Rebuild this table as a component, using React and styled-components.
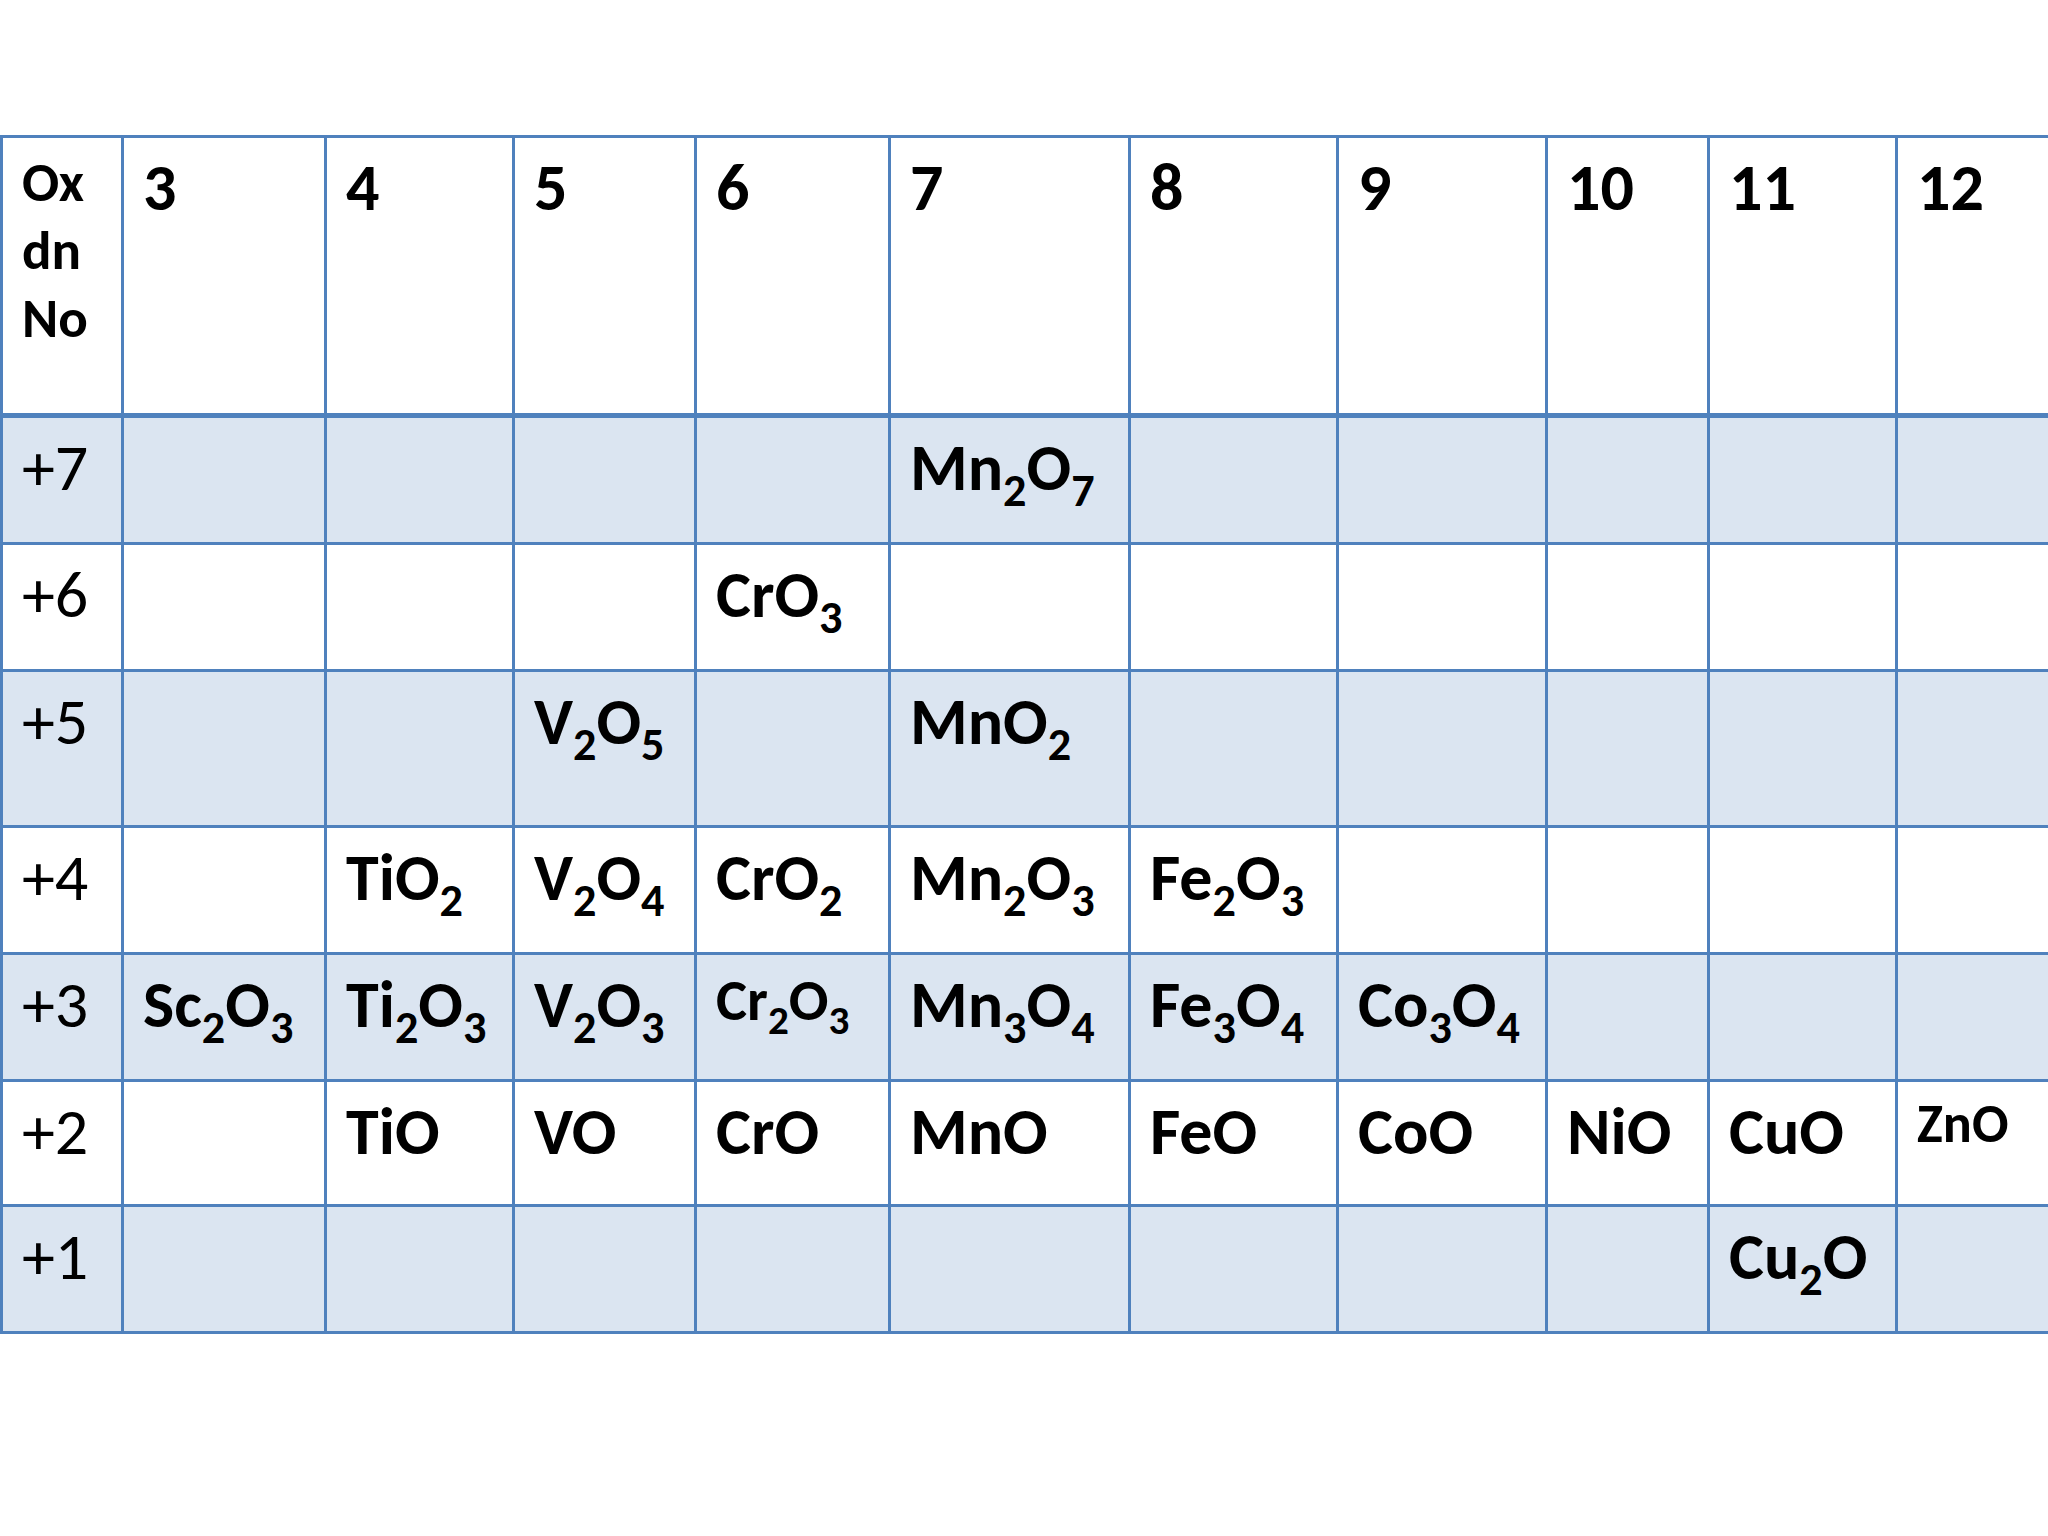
import styled, { createGlobalStyle } from "styled-components";

const GlobalStyle = createGlobalStyle`
    html, body {
        margin: 0;
        padding: 0;
        background: #ffffff;
        overflow: hidden;
    }
`

const Page = styled.div`
    width: 2048px;
    height: 1536px;
    padding-top: 135px;
    box-sizing: border-box;
    font-family: Carlito, Lato, "Liberation Sans", sans-serif;
    color: #000000;
`

const Table = styled.table`
    width: 2049px;
    table-layout: fixed;
    border-collapse: collapse;
`

const HeadCell = styled.th`
    height: 265px;
    padding: 10px 0 0 19px;
    border: 3px solid #4f81bd;
    border-bottom-width: 5px;
    background: #ffffff;
    vertical-align: top;
    text-align: left;
    font-size: 66px;
    font-weight: 700;
    line-height: 1.2;
`

const OxLabel = styled.div`
    font-size: 55px;
    font-weight: 700;
    line-height: 68px;
    &:first-child {
        margin-top: 1px;
    }
`

const Row = styled.tr`
    background: ${props => props.shaded ? "#dbe5f1" : "#ffffff"};
`

const Cell = styled.td`
    height: ${props => props.h}px;
    padding: 10px 0 0 19px;
    border: 3px solid #4f81bd;
    vertical-align: top;
    text-align: left;
    font-size: 66px;
    font-weight: ${props => props.label ? 400 : 700};
    line-height: 1.2;
    white-space: nowrap;
`

const Formula = styled.div`
    font-size: ${props => props.scale}em;
    line-height: 1.2;
`

const Sub = styled.span`
    font-size: 0.7em;
    vertical-align: -0.35em;
    line-height: 0;
`

const cols = [121, 203, 188, 182, 194, 240, 208, 209, 162, 188, 153]
const groups = ["3", "4", "5", "6", "7", "8", "9", "10", "11", "12"]

const rows = [
    { ox: "+7", h: 114, shaded: true, cells: { 4: "Mn2O7" } },
    { ox: "+6", h: 114, shaded: false, cells: { 3: "CrO3" } },
    { ox: "+5", h: 143, shaded: true, cells: { 2: "V2O5", 4: "MnO2" } },
    { ox: "+4", h: 114, shaded: false, cells: { 1: "TiO2", 2: "V2O4", 3: "CrO2", 4: "Mn2O3", 5: "Fe2O3" } },
    { ox: "+3", h: 114, shaded: true, cells: { 0: "Sc2O3", 1: "Ti2O3", 2: "V2O3", 3: "Cr2O3", 4: "Mn3O4", 5: "Fe3O4", 6: "Co3O4" } },
    { ox: "+2", h: 112, shaded: false, cells: { 1: "TiO", 2: "VO", 3: "CrO", 4: "MnO", 5: "FeO", 6: "CoO", 7: "NiO", 8: "CuO", 9: "ZnO" } },
    { ox: "+1", h: 114, shaded: true, cells: { 8: "Cu2O" } },
]

// a few formulas were typed smaller on the slide
const smaller = {
    Cr2O3: 0.89,
    ZnO: 0.82,
}

function Chem({ text }) {
    const parts = text.split(/(\d+)/).filter(p => p !== "")
    return (
        <Formula scale={smaller[text] || 1}>
            {parts.map((p, i) => /\d/.test(p) ? <Sub key={i}>{p}</Sub> : <span key={i}>{p}</span>)}
        </Formula>
    )
}

function App() {
    return (
        <Page>
            <GlobalStyle />
            <Table>
                <colgroup>
                    {cols.map((w, i) => <col key={i} style={{ width: w }} />)}
                </colgroup>
                <thead>
                    <tr>
                        <HeadCell>
                            <OxLabel>Ox</OxLabel>
                            <OxLabel>dn</OxLabel>
                            <OxLabel>No</OxLabel>
                        </HeadCell>
                        {groups.map(g => <HeadCell key={g}>{g}</HeadCell>)}
                    </tr>
                </thead>
                <tbody>
                    {rows.map(r =>
                        <Row key={r.ox} shaded={r.shaded}>
                            <Cell h={r.h} label>{r.ox}</Cell>
                            {groups.map((g, i) =>
                                <Cell key={g} h={r.h}>
                                    {r.cells[i] ? <Chem text={r.cells[i]} /> : null}
                                </Cell>
                            )}
                        </Row>
                    )}
                </tbody>
            </Table>
        </Page>
    )
}

export default App;
